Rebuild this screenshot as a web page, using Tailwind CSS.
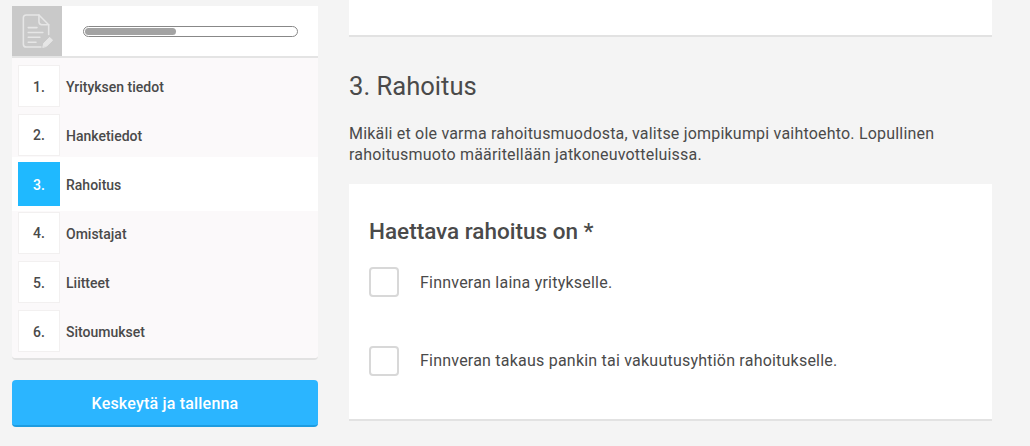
<!DOCTYPE html>
<html>
<head>
<meta charset="utf-8"/>
<title>Rahoitus</title>
<script src="https://cdn.jsdelivr.net/npm/@tailwindcss/browser@4"></script>
</head>
<body class="bg-[#f4f4f4] font-['Roboto',sans-serif] text-[#4a4a4a]">
<div class="w-[1030px] h-[446px] overflow-hidden flex pl-3 gap-[31px]">
  <!-- sidebar -->
  <div class="w-[306px] shrink-0 pt-1.5">
    <div class="flex h-[52px] bg-white border-b-2 border-[#e4e4e4]">
      <div class="w-[50px] h-[50px] bg-[#c9c9c9] flex items-center justify-center">
        <svg width="32" height="37" viewBox="0 0 32 38" fill="none" stroke="#e6e6e6" stroke-width="1.6" stroke-linecap="round" stroke-linejoin="round">
          <path d="M20 35H5a3 3 0 0 1-3-3V5a3 3 0 0 1 3-3h13l10 10v10"/>
          <path d="M18 2v7a3 3 0 0 0 3 3h7"/>
          <path d="M7 15h9M7 20h15M7 25h12M7 30h8"/>
          <path d="M22 35l1-4 6-6 3 3-6 6z" fill="#e6e6e6" stroke-width="1"/>
        </svg>
      </div>
      <div class="flex-1 pl-[21px] pr-5 pt-[20px]">
        <div class="h-[11px] rounded-full border border-[#888] bg-white p-px">
          <div class="w-[91px] h-full rounded-full bg-[#a3a3a3]"></div>
        </div>
      </div>
    </div>
    <ol class="bg-[#fbf9fa] pt-[7px] pb-1.5 border-b-2 border-[#e2e2e2] rounded-b-sm text-sm font-medium">
      <li class="flex items-center pl-1.5 gap-1.5 mb-[7px]">
        <span class="w-[42px] h-[42px] pt-0.5 bg-white border border-[#f2f0f0] flex items-center justify-center">1.</span>
        <span class="pt-0.5">Yrityksen tiedot</span>
      </li>
      <li class="flex items-center pl-1.5 gap-1.5 mb-px">
        <span class="w-[42px] h-[42px] bg-white border border-[#f2f0f0] flex items-center justify-center">2.</span>
        <span class="pt-0.5">Hanketiedot</span>
      </li>
      <li class="flex items-center h-[54px] pl-1.5 gap-1.5 bg-white">
        <span class="w-[42px] h-[44px] pt-0.5 bg-[#1fb9ff] text-white flex items-center justify-center">3.</span>
        <span class="pt-0.5">Rahoitus</span>
      </li>
      <li class="flex items-center pl-1.5 gap-1.5 mt-px mb-[7px]">
        <span class="w-[42px] h-[42px] bg-white border border-[#f2f0f0] flex items-center justify-center">4.</span>
        <span class="pt-0.5">Omistajat</span>
      </li>
      <li class="flex items-center pl-1.5 gap-1.5 mb-[7px]">
        <span class="w-[42px] h-[42px] pt-0.5 bg-white border border-[#f2f0f0] flex items-center justify-center">5.</span>
        <span class="pt-0.5">Liitteet</span>
      </li>
      <li class="flex items-center pl-1.5 gap-1.5">
        <span class="w-[42px] h-[42px] pt-0.5 bg-white border border-[#f2f0f0] flex items-center justify-center">6.</span>
        <span class="pt-0.5">Sitoumukset</span>
      </li>
    </ol>
    <button class="mt-5 w-full h-[47px] pt-0.5 rounded-sm bg-[#2bb5ff] border-b-2 border-[#1d9ce0] text-white text-base font-medium tracking-[0.2px]">Keskeytä ja tallenna</button>
  </div>
  <!-- main -->
  <div class="w-[643px] shrink-0">
    <div class="h-[37px] bg-white border-b-2 border-[#e2e2e2]"></div>
    <h2 class="mt-[34px] text-[25.6px] leading-[30px]">3. Rahoitus</h2>
    <p class="mt-[22px] text-base leading-[21px] tracking-[0.2px]">Mikäli et ole varma rahoitusmuodosta, valitse jompikumpi vaihtoehto. Lopullinen<br/>rahoitusmuoto määritellään jatkoneuvotteluissa.</p>
    <div class="mt-[19px] h-[237px] bg-white border-b-2 border-[#e2e2e2] px-5 pt-[33px]">
      <h3 class="text-[22.5px] leading-[28px] font-medium">Haettava rahoitus on *</h3>
      <label class="mt-[22px] flex items-center gap-[21px] h-[30px]">
        <span class="w-[30px] h-[30px] border-2 border-[#d8d8d8] rounded-sm bg-white"></span>
        <span class="text-base tracking-[0.22px] pt-0.5">Finnveran laina yritykselle.</span>
      </label>
      <label class="mt-[49px] flex items-center gap-[21px] h-[30px]">
        <span class="w-[30px] h-[30px] border-2 border-[#d8d8d8] rounded-sm bg-white"></span>
        <span class="text-base tracking-[0.22px]">Finnveran takaus pankin tai vakuutusyhtiön rahoitukselle.</span>
      </label>
    </div>
  </div>
</div>
</body>
</html>
